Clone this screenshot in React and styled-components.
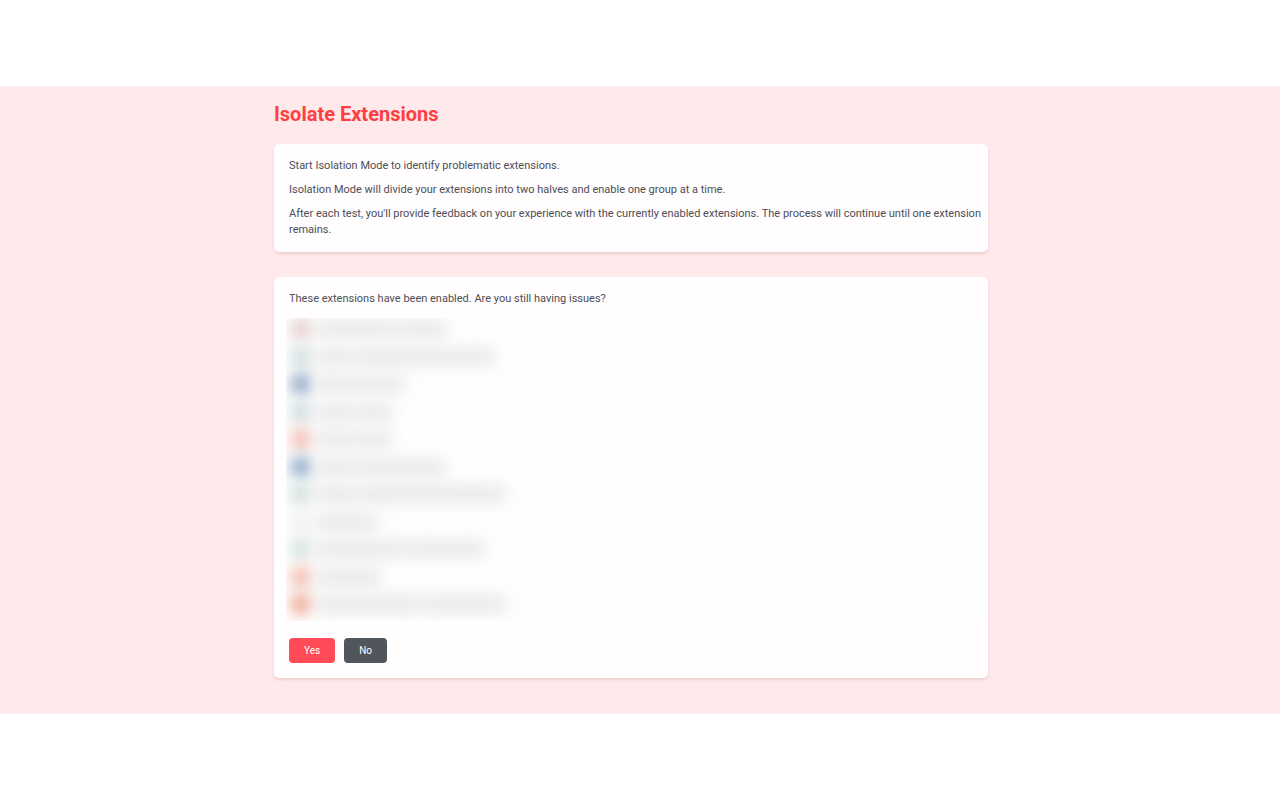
import React from 'react';
import styled, { createGlobalStyle } from 'styled-components';

const GlobalStyle = createGlobalStyle`
  *, *::before, *::after { box-sizing: border-box; }
  body { margin: 0; background: #fff; font-family: Roboto, sans-serif; color: #4d4d55; }
  h1, p, ul { margin: 0; padding: 0; }
`;

const Page = styled.div`
  min-height: 100vh;
  display: flex;
  flex-direction: column;
  justify-content: center;
`;

const Band = styled.main`
  background: #ffeaeb;
  padding: 16px 18px 36px 0;
`;

const Content = styled.div`
  width: 100%;
  max-width: 714px;
  margin: 0 auto;
`;

const Title = styled.h1`
  margin-bottom: 18px;
  font-size: 20px;
  line-height: 24px;
  font-weight: 700;
  color: #ff3e41;
`;

const Card = styled.section`
  background: #fffdfe;
  border-radius: 5px;
  padding: 14px 4px 14px 15px;
  box-shadow: 0 2px 3px rgba(120, 50, 40, 0.14);

  & + & {
    margin-top: 25px;
    padding-bottom: 15px;
  }
`;

const Text = styled.p`
  font-size: 11px;
  line-height: 16px;

  & + & { margin-top: 8px; }
`;

const ExtensionList = styled.ul`
  list-style: none;
  display: flex;
  flex-direction: column;
  justify-content: space-between;
  height: 303px;
  margin: 11px 0 17px -3px;
  padding: 2px 0 8px 4px;
  overflow: hidden;
  background: #fefefe;
`;

const ExtensionRow = styled.li`
  display: flex;
  align-items: center;
  height: 18px;
  gap: 4px;
`;

const Icon = styled.span`
  width: 22px;
  height: 22px;
  border-radius: 50%;
  background: ${(p) => p.$color};
  filter: blur(7px);
`;

const Name = styled.span`
  display: flex;
  gap: 2px;
  filter: blur(8px);
`;

const Word = styled.span`
  width: ${(p) => p.$width}px;
  height: 16px;
  background: #e6e7e5;
`;

const Actions = styled.div`
  display: flex;
  gap: 9px;
`;

const Button = styled.button`
  height: 25px;
  padding: 0 15px;
  border: 0;
  border-radius: 4px;
  background: ${(p) => (p.$primary ? '#ff4a57' : '#50565b')};
  color: #fff;
  font-family: inherit;
  font-size: 10px;
  line-height: 16px;
  cursor: pointer;
`;

const extensions = [
  { color: '#e5d0d0', words: [80, 48] },
  { color: '#d3dfdf', words: [38, 138] },
  { color: '#96adca', words: [62, 24] },
  { color: '#d0dde0', words: [40, 34] },
  { color: '#f4c0b7', words: [40, 34] },
  { color: '#96afcd', words: [42, 85] },
  { color: '#d3e1df', words: [40, 147] },
  { color: '#eff1f1', words: [62] },
  { color: '#d6e3de', words: [90, 76] },
  { color: '#f4beb2', words: [64] },
  { color: '#f0ad99', words: [104, 84] },
];

export default function App() {
  return (
    <>
      <GlobalStyle />
      <Page>
        <Band>
          <Content>
            <Title>Isolate Extensions</Title>
            <Card>
              <Text>Start Isolation Mode to identify problematic extensions.</Text>
              <Text>Isolation Mode will divide your extensions into two halves and enable one group at a time.</Text>
              <Text>
                After each test, you'll provide feedback on your experience with the currently enabled extensions.
                The process will continue until one extension remains.
              </Text>
            </Card>
            <Card>
              <Text>These extensions have been enabled. Are you still having issues?</Text>
              <ExtensionList>
                {extensions.map((extension, index) => (
                  <ExtensionRow key={index}>
                    <Icon $color={extension.color} />
                    <Name>
                      {extension.words.map((width, i) => (
                        <Word key={i} $width={width} />
                      ))}
                    </Name>
                  </ExtensionRow>
                ))}
              </ExtensionList>
              <Actions>
                <Button type="button" $primary>Yes</Button>
                <Button type="button">No</Button>
              </Actions>
            </Card>
          </Content>
        </Band>
      </Page>
    </>
  );
}
